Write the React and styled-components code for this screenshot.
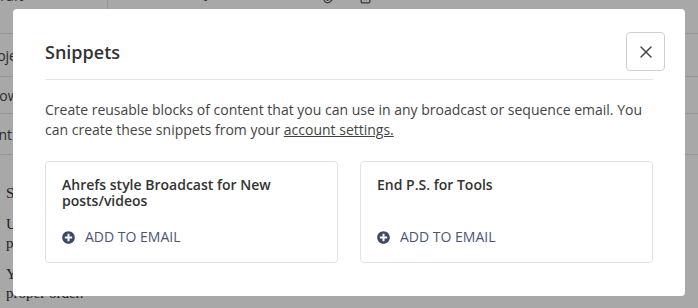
import styled, { createGlobalStyle } from 'styled-components';
import { X, Paperclip, Trash2, ChevronDown } from 'lucide-react';
import { FaPlusCircle } from 'react-icons/fa';

const snippets = [
  { id: 1, title: 'Ahrefs style Broadcast for New posts/videos' },
  { id: 2, title: 'End P.S. for Tools' },
];

const rows = [
  { label: 'Project', height: 43 },
  { label: 'Show', height: 37 },
  { label: 'Sent', height: 41 },
];

const App = () => {
  return (
    <>
      <GlobalStyle />
      <StyledPage>
        <StyledTopBar>
          <StyledStatus>
            Draft <ChevronDown size={12} />
          </StyledStatus>
          <StyledSchedule>Sunday, 9 AM</StyledSchedule>
          <StyledTools>
            <Paperclip size={15} />
            <Trash2 size={15} />
          </StyledTools>
        </StyledTopBar>
        {rows.map((row) => (
          <StyledRow key={row.label} $height={row.height}>
            <span>{row.label}</span>
          </StyledRow>
        ))}
        <StyledBody>
          <p>Subscribers will see this message first.</p>
          <p>
            Use the editor below to write the email body and add your
            <br />
            posts and videos.
          </p>
          <p>
            You can drag and drop snippets to arrange them in the
            <br />
            proper order.
          </p>
        </StyledBody>
      </StyledPage>

      <StyledOverlay>
        <StyledModal>
          <StyledHeader>
            <h2>Snippets</h2>
            <StyledClose aria-label='Close'>
              <X size={20} strokeWidth={1.7} />
            </StyledClose>
          </StyledHeader>
          <StyledDescription>
            Create reusable blocks of content that you can use in any broadcast
            or sequence email. You can create these snippets from your{' '}
            <a href='#settings'>account settings.</a>
          </StyledDescription>
          <StyledCards>
            {snippets.map((snippet) => (
              <StyledCard key={snippet.id}>
                <h3>{snippet.title}</h3>
                <StyledAdd>
                  <FaPlusCircle size={13} />
                  Add to email
                </StyledAdd>
              </StyledCard>
            ))}
          </StyledCards>
        </StyledModal>
      </StyledOverlay>
    </>
  );
};

//styled-components
const GlobalStyle = createGlobalStyle`
  body {
    margin: 0;
    font-family: 'Open Sans', 'Liberation Sans', sans-serif;
    background: #fff;
  }
`;

const StyledPage = styled.div`
  width: 698px;
  height: 308px;
  overflow: hidden;
  color: #444;
  font-size: 14px;
`;

const StyledTopBar = styled.div`
  display: flex;
  align-items: flex-start;
  height: 48px;
  margin-top: -14px;
  box-sizing: border-box;
  border-bottom: 1px solid #e4e4e4;
  line-height: 20px;
`;

const StyledStatus = styled.div`
  display: flex;
  align-items: flex-start;
  justify-content: space-between;
  width: 118px;
  height: 100%;
  margin-left: -10px;
  padding: 0 8px 0 0;
  box-sizing: border-box;
  border-right: 1px solid #e4e4e4;
  svg {
    margin-top: 1px;
  }
`;

const StyledSchedule = styled.div`
  margin-top: -4px;
  padding-left: 55px;
`;

const StyledTools = styled.div`
  display: flex;
  gap: 21px;
  margin: 3px 0 0 70px;
  color: #555;
`;

const StyledRow = styled.div`
  display: flex;
  align-items: center;
  height: ${(p) => p.$height}px;
  box-sizing: border-box;
  border-bottom: 1px solid #e4e4e4;
  span {
    margin-left: -17px;
  }
`;

const StyledBody = styled.div`
  padding: 29px 6px 0;
  font-family: 'Liberation Serif', serif;
  font-size: 15px;
  line-height: 19px;
  color: #333;
  p {
    margin: 0 0 12px;
  }
`;

const StyledOverlay = styled.div`
  position: fixed;
  inset: 0;
  display: flex;
  justify-content: center;
  align-items: flex-start;
  padding-top: 9px;
  background: rgba(0, 0, 0, 0.34);
`;

const StyledModal = styled.div`
  width: 672px;
  box-sizing: border-box;
  padding: 23px 32px 33px;
  background: #fff;
  border-radius: 4px;
`;

const StyledHeader = styled.div`
  display: flex;
  align-items: center;
  justify-content: space-between;
  padding-bottom: 8px;
  border-bottom: 1px solid #e3e3e3;
  h2 {
    margin: 0;
    font-size: 18px;
    font-weight: 600;
    color: #333;
  }
`;

const StyledClose = styled.button`
  display: flex;
  align-items: center;
  justify-content: center;
  width: 39px;
  height: 39px;
  margin-right: -12px;
  padding: 0;
  background: #fff;
  border: 1px solid #cfcfcf;
  border-radius: 4px;
  color: #444;
`;

const StyledDescription = styled.p`
  margin: 20px 0 0;
  font-size: 14px;
  line-height: 20px;
  color: #444;
  a {
    color: inherit;
    text-decoration: underline;
  }
`;

const StyledCards = styled.div`
  display: grid;
  grid-template-columns: 1fr 1fr;
  gap: 22px;
  margin-top: 21px;
`;

const StyledCard = styled.div`
  display: flex;
  flex-direction: column;
  justify-content: space-between;
  height: 102px;
  box-sizing: border-box;
  padding: 15px 16px;
  border: 1px solid #e2e2e2;
  border-radius: 4px;
  h3 {
    margin: 0;
    font-size: 14px;
    font-weight: 600;
    line-height: 16px;
    color: #333;
  }
`;

const StyledAdd = styled.button`
  display: flex;
  align-items: center;
  gap: 10px;
  align-self: flex-start;
  padding: 0;
  background: none;
  border: 0;
  font-family: inherit;
  font-size: 14px;
  line-height: 20px;
  text-transform: uppercase;
  color: #4b5575;
  svg {
    color: #3e4868;
  }
`;

export default App;
